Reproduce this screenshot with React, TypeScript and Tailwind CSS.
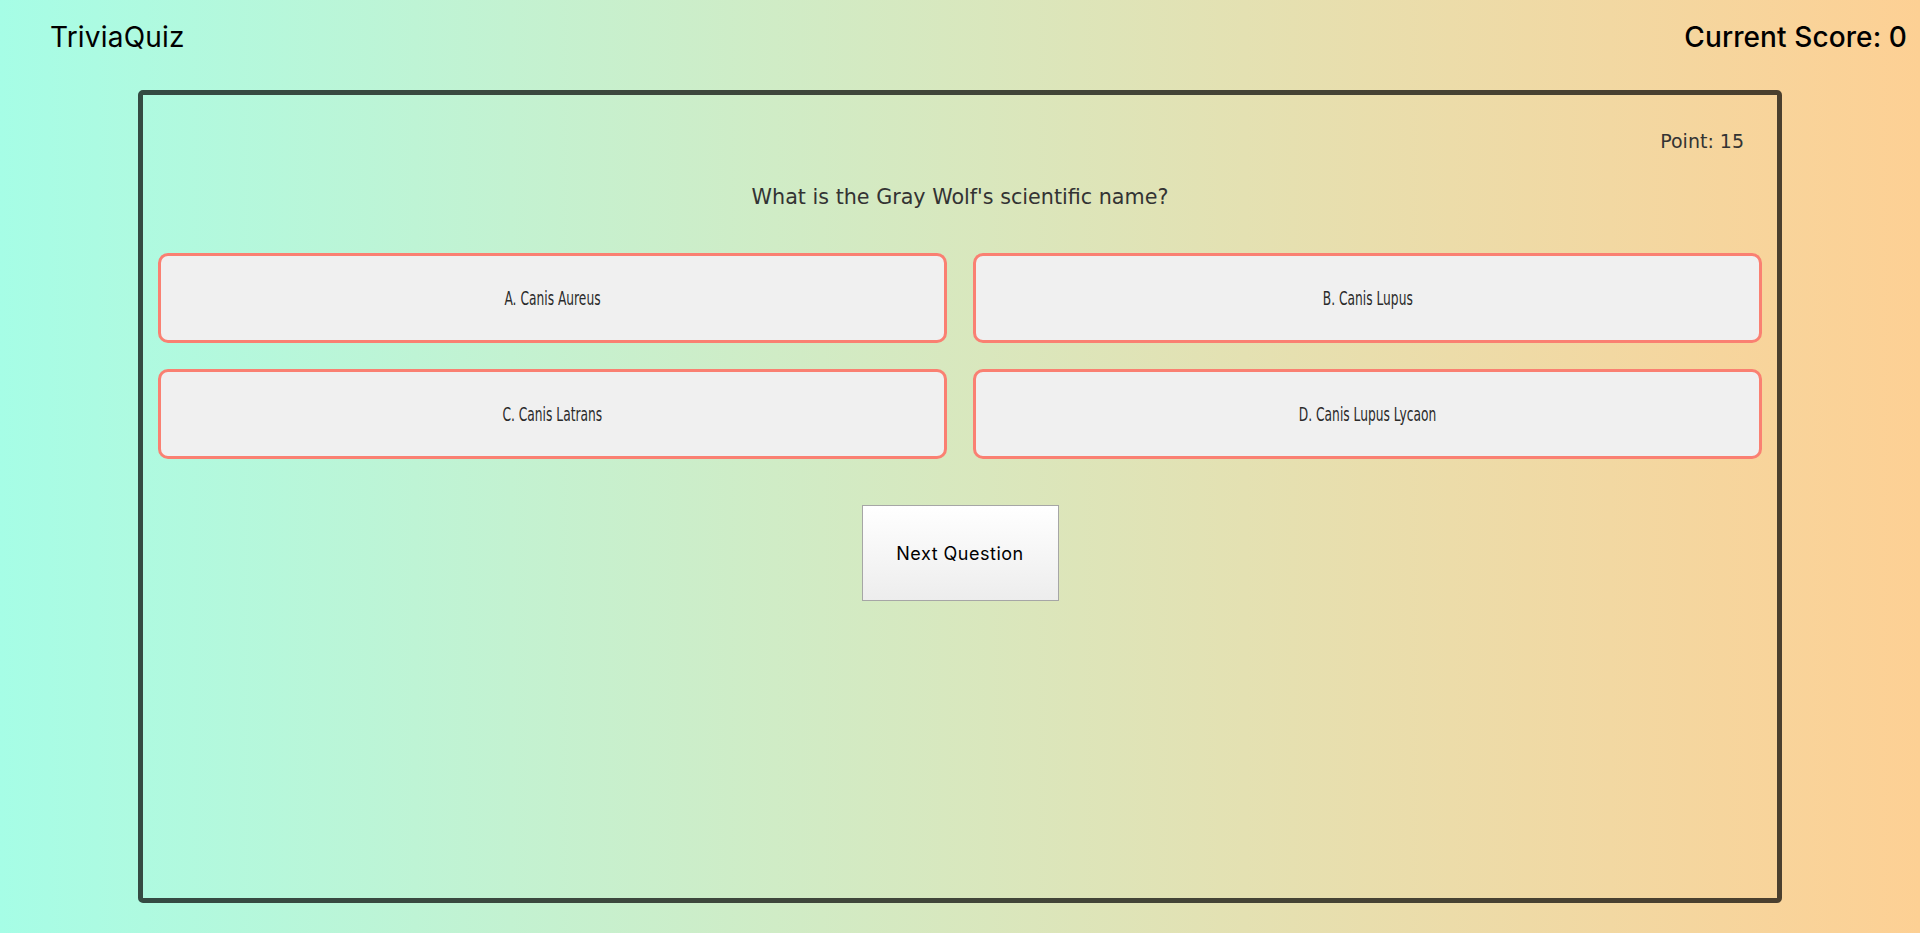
import React from "react";

const answers = [
  "A. Canis Aureus",
  "B. Canis Lupus",
  "C. Canis Latrans",
  "D. Canis Lupus Lycaon",
];

export default function App() {
  return (
    <div className="h-[933px] w-full overflow-hidden bg-gradient-to-r from-[#a6fde6] to-[#fdd094]">
      <header className="flex h-[90px] items-start justify-between pl-[50px] pr-[13px] pt-[16px] font-['Inter',sans-serif] text-[28px] text-black">
        <h1 className="font-normal tracking-[0.2px]">TriviaQuiz</h1>
        <div className="font-medium tracking-[0.1px]">Current Score: 0</div>
      </header>

      <main className="mx-auto h-[813px] w-[1644px] rounded-[5px] border-[5px] border-black/70">
        <div className="px-[15px] pt-[32px]">
          <div className="pr-[18px] text-right font-['DejaVu_Sans',sans-serif] text-[19px] leading-[28px] text-[#333]">
            Point: 15
          </div>
          <p className="mt-[28px] text-center font-['DejaVu_Sans',sans-serif] text-[20.7px] leading-[28px] text-[#333]">
            What is the Gray Wolf's scientific name?
          </p>

          <div className="mt-[42px] grid grid-cols-2 gap-x-[26px] gap-y-[26px]">
            {answers.map((a) => (
              <button
                key={a}
                className="flex h-[90px] items-center justify-center rounded-[10px] border-[3px] border-[#fa8072] bg-[#f0f0f0] text-[#2a2a2a]"
              >
                <span className="inline-block scale-x-[0.645] font-['DejaVu_Sans',sans-serif] text-[19px]">
                  {a}
                </span>
              </button>
            ))}
          </div>

          <div className="mt-[46px] flex justify-center">
            <button className="h-[96px] w-[197px] border border-[#a6a6a6] bg-gradient-to-b from-white to-[#ededed] font-['Inter',sans-serif] text-[18px] tracking-[0.5px] text-black">
              Next Question
            </button>
          </div>
        </div>
      </main>
    </div>
  );
}
